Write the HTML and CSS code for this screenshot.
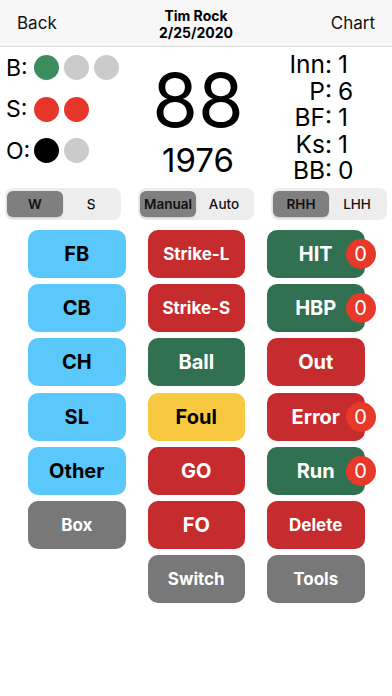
FILE: index.html
```html
<!DOCTYPE html>
<html lang="en">
<head>
  <meta charset="UTF-8">
  <title>Tim Rock - Pitch Tracker</title>
  <link rel="stylesheet" href="styles.css">
</head>
<body>
  <!-- Nav bar -->
  <div class="navbar">
    <span class="nav-link">Back</span>
    <div class="nav-title">
      <div>Tim Rock</div>
      <div>2/25/2020</div>
    </div>
    <span class="nav-link">Chart</span>
  </div>

  <!-- Count / pitch number / stats -->
  <div class="top">
    <div class="counts">
      <div class="count-row">
        <span class="count-label">B:</span>
        <span class="dot green"></span><span class="dot"></span><span class="dot"></span>
      </div>
      <div class="count-row">
        <span class="count-label">S:</span>
        <span class="dot red"></span><span class="dot red"></span>
      </div>
      <div class="count-row">
        <span class="count-label">O:</span>
        <span class="dot black"></span><span class="dot"></span>
      </div>
    </div>

    <div class="pitch-number">
      <div class="big">88</div>
      <div class="total">1976</div>
    </div>

    <div class="stats">
      <span class="stat-label">Inn:</span><span class="stat-value">1</span>
      <span class="stat-label">P:</span><span class="stat-value">6</span>
      <span class="stat-label">BF:</span><span class="stat-value">1</span>
      <span class="stat-label">Ks:</span><span class="stat-value">1</span>
      <span class="stat-label">BB:</span><span class="stat-value">0</span>
    </div>
  </div>

  <!-- Segmented controls -->
  <div class="segments">
    <div class="segmented">
      <span class="seg selected">W</span>
      <span class="seg">S</span>
    </div>
    <div class="segmented">
      <span class="seg selected">Manual</span>
      <span class="seg">Auto</span>
    </div>
    <div class="segmented">
      <span class="seg selected">RHH</span>
      <span class="seg">LHH</span>
    </div>
  </div>

  <!-- Buttons -->
  <div class="pad">
    <div class="col">
      <button class="btn blue">FB</button>
      <button class="btn blue">CB</button>
      <button class="btn blue">CH</button>
      <button class="btn blue">SL</button>
      <button class="btn blue">Other</button>
      <button class="btn gray small">Box</button>
    </div>
    <div class="col">
      <button class="btn red small">Strike-L</button>
      <button class="btn red small">Strike-S</button>
      <button class="btn green">Ball</button>
      <button class="btn yellow">Foul</button>
      <button class="btn red">GO</button>
      <button class="btn red">FO</button>
      <button class="btn gray small">Switch</button>
    </div>
    <div class="col">
      <button class="btn green">HIT<span class="badge">0</span></button>
      <button class="btn green">HBP<span class="badge">0</span></button>
      <button class="btn red">Out</button>
      <button class="btn red">Error<span class="badge">0</span></button>
      <button class="btn green">Run<span class="badge">0</span></button>
      <button class="btn red small">Delete</button>
      <button class="btn gray small">Tools</button>
    </div>
  </div>
</body>
</html>
```

FILE: styles.css
```css
body {
  margin: 0;
  font-family: Inter, 'Noto Sans', sans-serif;
  background: #ffffff;
  color: #000;
  width: 392px;
}

.navbar {
  height: 46px;
  background: #f7f7f7;
  border-bottom: 1px solid #d9d9d9;
  display: flex;
  align-items: center;
  justify-content: space-between;
  padding: 0 17px;
}

.nav-link {
  font-size: 17px;
  color: #111;
  width: 60px;
}

.nav-link:last-child {
  text-align: right;
}

.nav-title {
  text-align: center;
  font-size: 14px;
  font-weight: 700;
  line-height: 17px;
  margin-top: 1px;
}

.top {
  display: flex;
  height: 141px;
}

.counts {
  width: 130px;
  padding-left: 6px;
}

.count-row {
  height: 41.5px;
  display: flex;
  align-items: center;
  gap: 5px;
}

.count-label {
  font-size: 23px;
  width: 23px;
}

.dot {
  width: 25px;
  height: 25px;
  border-radius: 50%;
  background: #cbcbcb;
}

.dot.green { background: #3b8d5e; }
.dot.red { background: #e8352a; }
.dot.black { background: #000; }

.pitch-number {
  width: 124px;
  text-align: center;
}

.big {
  font-size: 74px;
  line-height: 74px;
  margin-top: 16px;
}

.total {
  font-size: 33px;
  line-height: 33px;
  margin-top: 7px;
}

.stats {
  display: grid;
  grid-template-columns: 72px auto;
  align-content: start;
  padding-top: 4px;
  font-size: 24.5px;
  line-height: 26.5px;
}

.stat-label {
  text-align: right;
}

.stat-value {
  padding-left: 6px;
}

.segments {
  display: flex;
  gap: 17px;
  padding-left: 5px;
}

.segmented {
  width: 116px;
  height: 32px;
  box-sizing: border-box;
  padding: 3px 2px;
  background: #ededed;
  border-radius: 8px;
  display: flex;
}

.seg {
  flex: 1;
  display: flex;
  align-items: center;
  justify-content: center;
  font-size: 13.5px;
  font-weight: 500;
  color: #111;
  border-radius: 6px;
}

.seg.selected {
  background: #7f7f7f;
  font-weight: 600;
  box-shadow: 0 1px 2px rgba(0, 0, 0, 0.15);
}

.pad {
  display: flex;
  gap: 22px;
  padding-left: 28px;
  margin-top: 10px;
}

.col {
  width: 97.5px;
  display: flex;
  flex-direction: column;
  gap: 6.2px;
}

.btn {
  position: relative;
  height: 48px;
  border: none;
  border-radius: 10px;
  font-family: Inter, 'Noto Sans', sans-serif;
  font-size: 20px;
  font-weight: 700;
  color: #fff;
  padding: 0;
  cursor: pointer;
}

.btn.small { font-size: 17px; }

.blue { background: #5ac8fa; color: #000; }
.red { background: #c62b2d; }
.green { background: #317050; }
.yellow { background: #f8c840; color: #000; }
.gray { background: #787878; }

.badge {
  position: absolute;
  right: -11px;
  top: 9px;
  width: 30px;
  height: 30px;
  border-radius: 50%;
  background: #e8382a;
  color: #fff;
  font-size: 20px;
  font-weight: 400;
  line-height: 30px;
  text-align: center;
}
```
